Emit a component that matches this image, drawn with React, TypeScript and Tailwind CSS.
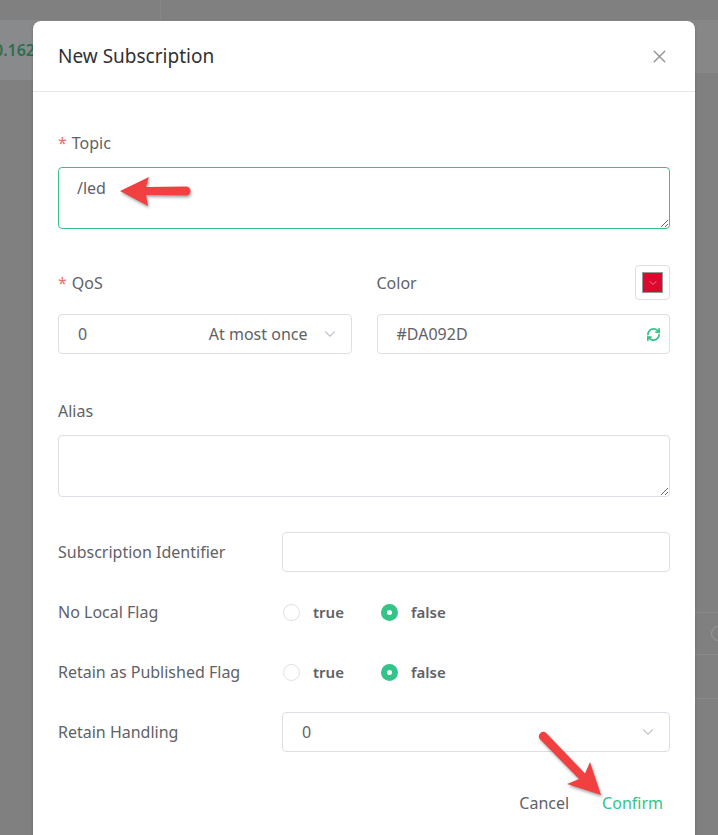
import { ChevronDown, RefreshCw, X } from 'lucide-react';

function Radio({ checked, label }: { checked?: boolean; label: string }) {
    return (
        <span className="flex items-center gap-[13px]">
            {checked ? (
                <span className="flex h-[17px] w-[17px] items-center justify-center rounded-full bg-[#34c388]">
                    <span className="h-[5px] w-[5px] rounded-full bg-white" />
                </span>
            ) : (
                <span className="h-[17px] w-[17px] rounded-full border border-[#dcdfe6] bg-white" />
            )}
            <span className="text-[15px] font-semibold text-[#606266]">{label}</span>
        </span>
    );
}

function Label({ text, required }: { text: string; required?: boolean }) {
    return (
        <span className="text-[16px] leading-[24px] text-[#606266]">
            {required && <span className="mr-[5px] text-[#f56c6c]">*</span>}
            {text}
        </span>
    );
}

export default function App() {
    return (
        <div className="relative h-[835px] w-[718px] overflow-hidden bg-[#808080] font-['Noto_Sans',sans-serif]">
            {/* page behind the overlay */}
            <div className="flex h-[20px]">
                <div className="w-[161px] border-r border-[#878787]" />
                <div className="flex-1" />
            </div>
            <div className="flex">
                <div className="w-[161px]">
                    <div className="flex h-[60px] items-center bg-[#898a8b]">
                        <span className="-ml-[6px] text-[16px] font-semibold text-[#2f6e4f]">0.162</span>
                    </div>
                </div>
                <div className="flex-1">
                    <div className="h-[53px] bg-[#878787]" />
                    <div className="mt-[539px] h-[42px] border-t border-[#8a8a8a]">
                        <div className="flex h-full items-center justify-end">
                            <span className="-mr-[8px] h-[15px] w-[15px] rounded-full border border-[#999]" />
                        </div>
                    </div>
                    <div className="h-[44px] border-t border-[#8a8a8a]" />
                    <div className="border-t border-[#8a8a8a]" />
                </div>
            </div>

            {/* dialog */}
            <div className="absolute left-[33px] top-[21px] h-[830px] w-[662px] rounded-lg bg-white shadow-[0_1px_3px_rgba(0,0,0,0.2)]">
                <div className="flex h-[71px] items-center justify-between border-b border-[#e4e7ed] pl-[25px] pr-[25px]">
                    <span className="text-[19px] text-[#303133]">New Subscription</span>
                    <X className="h-[21px] w-[21px] text-[#909399]" strokeWidth={1.6} />
                </div>

                <div className="px-[25px] pt-[39px]">
                    <Label text="Topic" required />
                    <textarea
                        readOnly
                        value="/led"
                        className="mt-[12px] block h-[62px] w-full rounded border border-[#34c388] px-[18px] py-[9px] text-[16px] leading-[22px] text-[#606266] outline-none"
                    />

                    <div className="mt-[36px] grid grid-cols-2 gap-[25px]">
                        <div>
                            <div className="flex h-[35px] items-center">
                                <Label text="QoS" required />
                            </div>
                            <div className="mt-[14px] flex h-[40px] items-center rounded border border-[#dcdfe6] pl-[19px] pr-[12px] text-[16px] text-[#606266]">
                                <span className="flex-1">0</span>
                                <span>At most once</span>
                                <ChevronDown className="ml-[13px] h-[18px] w-[18px] text-[#c0c4cc]" strokeWidth={1.5} />
                            </div>
                        </div>
                        <div>
                            <div className="flex h-[35px] items-center justify-between">
                                <Label text="Color" />
                                <span className="flex h-[35px] w-[35px] items-center justify-center rounded border border-[#dcdfe6]">
                                    <span className="flex h-[21px] w-[21px] items-center justify-center border border-[#999] bg-[#DA092D]">
                                        <ChevronDown className="h-[12px] w-[12px] text-[#e8a0a8]" strokeWidth={1.5} />
                                    </span>
                                </span>
                            </div>
                            <div className="mt-[14px] flex h-[40px] items-center rounded border border-[#dcdfe6] pl-[19px] pr-[8px] text-[16px] text-[#606266]">
                                <span className="flex-1">#DA092D</span>
                                <RefreshCw className="h-[15px] w-[15px] text-[#34c388]" strokeWidth={2.8} />
                            </div>
                        </div>
                    </div>

                    <div className="mt-[45px]">
                        <Label text="Alias" />
                    </div>
                    <textarea
                        readOnly
                        value=""
                        className="mt-[12px] block h-[62px] w-full rounded border border-[#dcdfe6] px-[18px] py-[9px] text-[16px] outline-none"
                    />

                    <div className="mt-[35px] flex flex-col gap-[20px]">
                        <div className="flex h-[40px] items-center">
                            <div className="w-[224px]">
                                <Label text="Subscription Identifier" />
                            </div>
                            <div className="h-[40px] flex-1 rounded border border-[#dcdfe6]" />
                        </div>
                        <div className="flex h-[40px] items-center">
                            <div className="w-[224px]">
                                <Label text="No Local Flag" />
                            </div>
                            <div className="flex items-center gap-[37px] pl-[1px]">
                                <Radio label="true" />
                                <Radio label="false" checked />
                            </div>
                        </div>
                        <div className="flex h-[40px] items-center">
                            <div className="w-[224px]">
                                <Label text="Retain as Published Flag" />
                            </div>
                            <div className="flex items-center gap-[37px] pl-[1px]">
                                <Radio label="true" />
                                <Radio label="false" checked />
                            </div>
                        </div>
                        <div className="flex h-[40px] items-center">
                            <div className="w-[224px]">
                                <Label text="Retain Handling" />
                            </div>
                            <div className="flex h-[40px] flex-1 items-center rounded border border-[#dcdfe6] pl-[19px] pr-[12px] text-[16px] text-[#606266]">
                                <span className="flex-1">0</span>
                                <ChevronDown className="h-[18px] w-[18px] text-[#c0c4cc]" strokeWidth={1.5} />
                            </div>
                        </div>
                    </div>

                    <div className="mt-[39px] flex justify-end gap-[33px] pr-[7px] text-[16px]">
                        <span className="text-[#606266]">Cancel</span>
                        <span className="text-[#34c388]">Confirm</span>
                    </div>
                </div>
            </div>

            {/* annotation arrows */}
            <svg
                className="absolute left-[115px] top-[171px] h-[42px] w-[82px] drop-shadow-[1px_2px_1.5px_rgba(0,0,0,0.35)]"
                viewBox="0 0 82 42"
            >
                <path d="M5 20 L34 6 L31 16 L71 15.5 A4.5 4.5 0 0 1 71 24.5 L31 24 L33 35 Z" fill="#f04040" />
            </svg>
            <svg
                className="absolute left-[530px] top-[725px] h-[80px] w-[80px] drop-shadow-[1px_2px_1.5px_rgba(0,0,0,0.35)]"
                viewBox="0 0 80 80"
            >
                <path
                    d="M71 70 L37 59 L49 54 L9.8 14.1 A4.5 4.5 0 0 1 16.2 7.9 L55 48.5 L60 37 Z"
                    fill="#f04040"
                />
            </svg>
        </div>
    );
}
